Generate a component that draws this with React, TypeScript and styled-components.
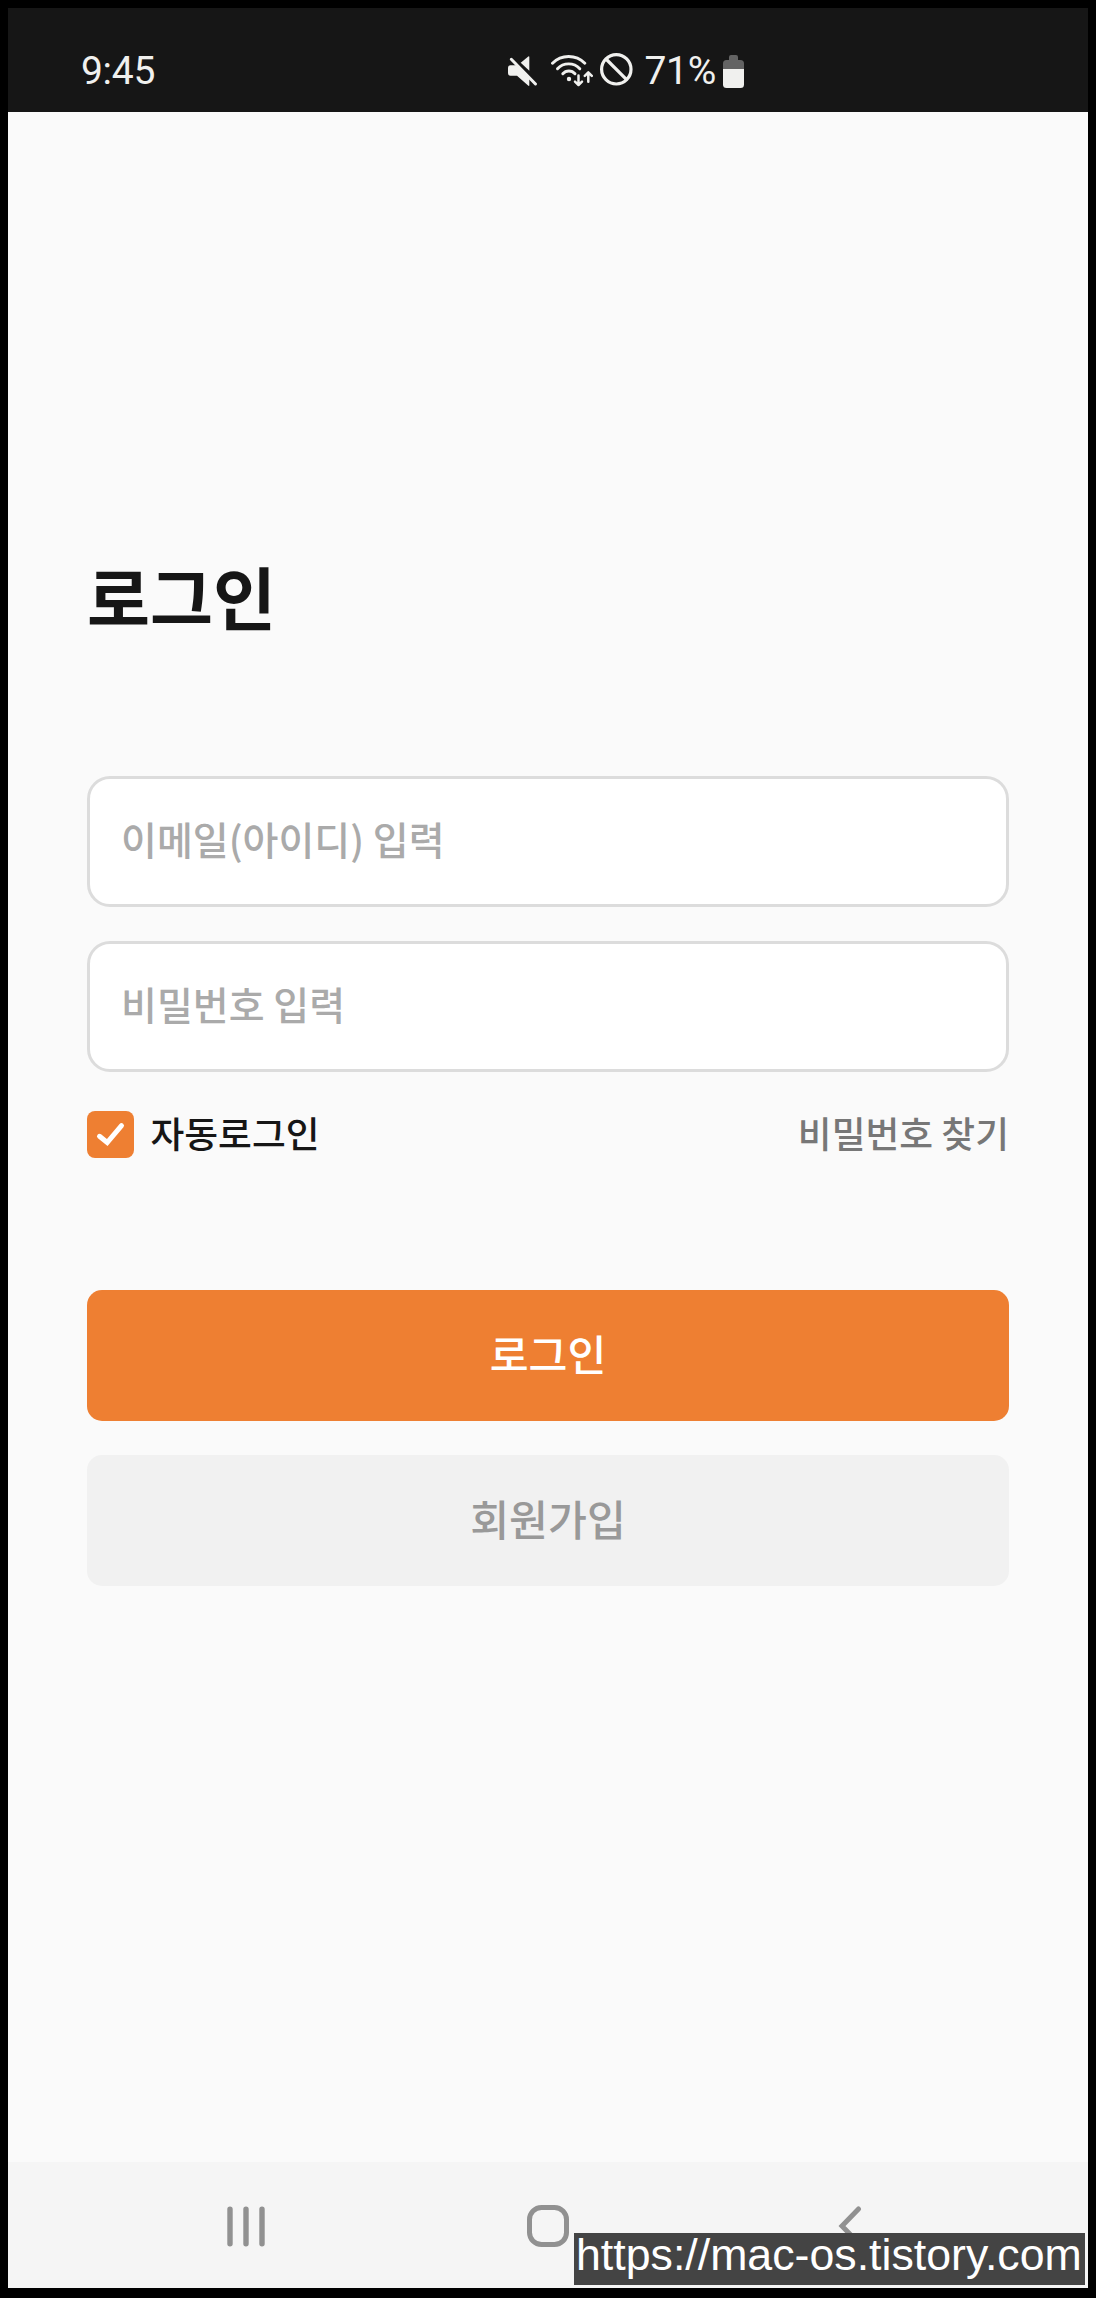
import React from 'react';
import styled, { createGlobalStyle } from 'styled-components';

const Global = createGlobalStyle`
  *, *::before, *::after { box-sizing: border-box; }
  body { margin: 0; background: #000; }
  button, input { font: inherit; }
`;

const Frame = styled.div`
  position: relative;
  width: 1096px;
  height: 2298px;
  padding: 8px 8px 10px;
  display: flex;
  flex-direction: column;
  background: #000;
  font-family: 'Noto Sans CJK KR', sans-serif;
`;

const StatusBar = styled.header`
  flex: none;
  height: 104px;
  padding: 20px 0 0 73px;
  display: flex;
  align-items: center;
  background: #161616;
  color: #f0f0ee;
  font: 400 39px/46px Roboto, sans-serif;
`;

const Clock = styled.time`
  width: 427px;
  padding-top: 2px;
  letter-spacing: -0.3px;
`;

const StatusIcons = styled.div`
  display: flex;
  align-items: center;
`;

const BatteryText = styled.span`
  margin-left: 10.5px;
  padding-top: 2px;
  width: 78.5px;
  letter-spacing: -0.3px;
`;

const Screen = styled.main`
  flex: 1;
  padding: 435px 79px 0;
  background: #fafafa;
`;

const Title = styled.h1`
  margin: 0;
  height: 98px;
  font-size: 68.5px;
  font-weight: 700;
  line-height: 98px;
  color: #161616;
`;

const Form = styled.form`
  margin-top: 131px;
  display: flex;
  flex-direction: column;
  gap: 34px;
`;

const Field = styled.input`
  height: 131px;
  padding: 0 31px 7px;
  border: 3px solid #dcdcdc;
  border-radius: 23px;
  outline: none;
  background: #fff;
  font-size: 39px;
  font-weight: 500;
  &::placeholder { color: #aaa; opacity: 1; }
`;

const Options = styled.div`
  height: 57px;
  display: flex;
  align-items: center;
  justify-content: space-between;
  font-size: 36.75px;
  font-weight: 500;
  line-height: 53px;
`;

const AutoLogin = styled.label`
  display: flex;
  align-items: center;
  gap: 16.5px;
  color: #161616;
`;

const OptionText = styled.span`
  padding-bottom: 4px;
`;

const CheckBox = styled.span`
  width: 47px;
  height: 47px;
  border-radius: 8px;
  background: #ee7f32;
  svg { display: block; }
`;

const FindLink = styled.a`
  padding-bottom: 4px;
  color: #777;
`;

const Actions = styled.div`
  margin-top: 93px;
  display: flex;
  flex-direction: column;
  gap: 34px;
`;

const Action = styled.button<{ $primary?: boolean }>`
  height: 131px;
  padding: 0 0 7px;
  border: 0;
  border-radius: 15px;
  background: ${(p) => (p.$primary ? '#ee7f32' : '#f1f1f1')};
  color: ${(p) => (p.$primary ? '#fff' : '#999')};
  font-size: 42.3px;
  font-weight: 500;
`;

const NavBar = styled.nav`
  flex: none;
  height: 126px;
  padding: 2px 60px 0;
  display: grid;
  grid-template-columns: 356px 248px 356px;
  align-items: center;
  justify-items: center;
  background: #f5f5f5;
`;

const Watermark = styled.div`
  position: absolute;
  left: 574px;
  top: 2233px;
  width: 511px;
  height: 52px;
  padding-left: 2px;
  background: #444;
  color: #fff;
  font: 400 44.7px/44px 'Liberation Sans', Arial, sans-serif;
  white-space: nowrap;
`;

const MuteIcon = () => (
  <svg width="30" height="34" viewBox="0 0 30 34" fill="#f0f0ee">
    <path d="M20.300 3.500q1-.8 1 .5v13.700l-8.600-8z" />
    <path d="M2.500 12.300h6L21.300 25v7.200q0 1.200-1.200.4L9 22.700H2.500A2.500 2.500 0 0 1 0 20.200v-5.400a2.500 2.500 0 0 1 2.500-2.500z" />
    <path d="M3.300 6.300l24.200 24.700" fill="none" stroke="#f0f0ee" strokeWidth="3" strokeLinecap="round" />
  </svg>
);

const WifiIcon = () => (
  <svg width="42" height="34" viewBox="0 0 42 34" fill="none" stroke="#f0f0ee" strokeLinecap="round">
    <g strokeWidth="2.900">
      <path d="M1.500 10.300a22.500 22.500 0 0 1 32.300 0" />
      <path d="M6.500 15.800a15 15 0 0 1 22.300 0" />
      <path d="M11.800 20.800a8 8 0 0 1 12.200 0" />
    </g>
    <circle cx="18" cy="26" r="2.200" fill="#f0f0ee" stroke="none" />
    <g strokeWidth="2.500" strokeLinejoin="round">
      <path d="M27.500 22.500v9M24 28.600l3.500 3.400 3.500-3.400" />
      <path d="M37.300 28.800v-8.600M33.800 22.800l3.500-3.400 3.500 3.400" />
    </g>
  </svg>
);

const BlockIcon = () => (
  <svg width="34" height="34" viewBox="0 0 34 34" fill="none" stroke="#f0f0ee" strokeWidth="3.200">
    <circle cx="16.300" cy="16.300" r="14.700" />
    <path d="M6 6l20.600 20.600" />
  </svg>
);

const BatteryIcon = () => (
  <svg width="21" height="36" viewBox="0 -3 21 36">
    <path d="M0 14V8.500A3.500 3.500 0 0 1 3.500 5H6V2a2 2 0 0 1 2-2h5a2 2 0 0 1 2 2v3h2.500A3.500 3.500 0 0 1 21 8.500V14z" fill="#636363" />
    <path d="M0 14h21v15.500a3.500 3.500 0 0 1-3.500 3.500h-14A3.500 3.500 0 0 1 0 29.500z" fill="#f0f0ee" />
  </svg>
);

const Gap = styled.span<{ $w: number }>`
  width: ${(p) => p.$w}px;
`;

export default function App() {
  return (
    <>
      <Global />
      <Frame>
        <StatusBar>
          <Clock>9:45</Clock>
          <StatusIcons>
            <MuteIcon />
            <Gap $w={13} />
            <WifiIcon />
            <Gap $w={7} />
            <BlockIcon />
            <BatteryText>71%</BatteryText>
            <BatteryIcon />
          </StatusIcons>
        </StatusBar>
        <Screen>
          <Title>로그인</Title>
          <Form>
            <Field placeholder="이메일(아이디) 입력" />
            <Field placeholder="비밀번호 입력" />
            <Options>
              <AutoLogin>
                <CheckBox>
                  <svg width="47" height="47" viewBox="0 0 47 47" fill="none" stroke="#fff" strokeWidth="5" strokeLinecap="round">
                    <path d="M12.500 25.300l7.700 6.200L34.500 14.600" />
                  </svg>
                </CheckBox>
                <OptionText>자동로그인</OptionText>
              </AutoLogin>
              <FindLink>비밀번호 찾기</FindLink>
            </Options>
            <Actions>
              <Action type="button" $primary>로그인</Action>
              <Action type="button">회원가입</Action>
            </Actions>
          </Form>
        </Screen>
        <NavBar>
          <svg width="38" height="41" viewBox="0 0 38 41" stroke="#919191" strokeWidth="5.400" strokeLinecap="round">
            <path d="M3 3.200v34.500M19 3.200v34.500M35 3.200v34.500" />
          </svg>
          <svg width="42" height="42" viewBox="0 0 42 42" fill="none" stroke="#919191" strokeWidth="5">
            <rect x="2.500" y="2.500" width="37" height="37" rx="12" />
          </svg>
          <svg width="24" height="42" viewBox="0 0 24 42" fill="none" stroke="#919191" strokeWidth="5" strokeLinecap="round">
            <path d="M20.500 4L4 21l16.500 17" />
          </svg>
        </NavBar>
        <Watermark>https://mac-os.tistory.com</Watermark>
      </Frame>
    </>
  );
}
